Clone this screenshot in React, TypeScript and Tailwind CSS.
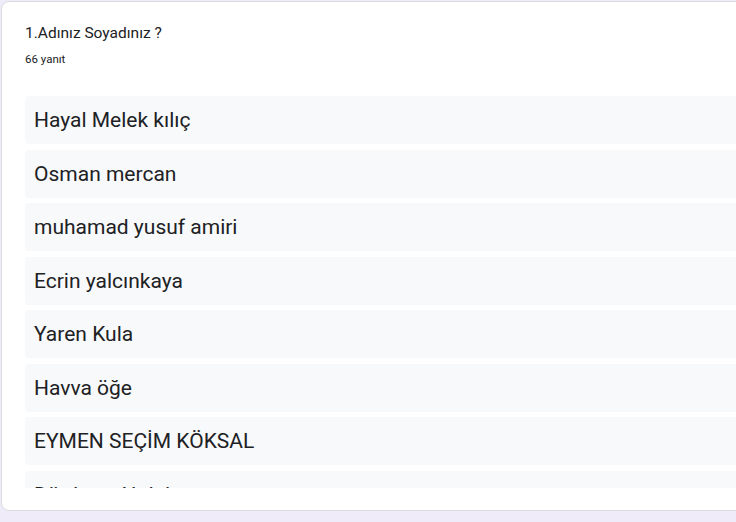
import React from "react";

const ANSWERS = [
  "Hayal Melek kılıç",
  "Osman mercan",
  "muhamad yusuf amiri",
  "Ecrin yalcınkaya",
  "Yaren Kula",
  "Havva öğe",
  "EYMEN SEÇİM KÖKSAL",
  "Dürdane Akdal",
];

export default function App() {
  return (
    <div className="h-[522px] w-[736px] overflow-hidden bg-[#f0ebf8] pl-[1px] pt-[1px]" style={{ fontFamily: "Roboto, 'Noto Sans', sans-serif" }}>
      <div className="flex h-[510px] w-[780px] flex-col rounded-lg border border-[#dadce0] bg-white pl-[23px] pt-[19px]">
        <div className="text-[15.5px] leading-6 text-[#202124]">1.Adınız Soyadınız ?</div>
        <div className="mt-[4px] text-[11.5px] leading-5 text-[#202124]">66 yanıt</div>
        <div className="mt-[27px] flex h-[392px] flex-col gap-[5.5px] overflow-hidden pr-6">
          {ANSWERS.map((a) => (
            <div key={a} className="flex h-12 shrink-0 items-center rounded bg-[#f8f9fa] px-[9px] pt-[2px] text-[21px] text-[#202124]">
              {a}
            </div>
          ))}
        </div>
      </div>
    </div>
  );
}
